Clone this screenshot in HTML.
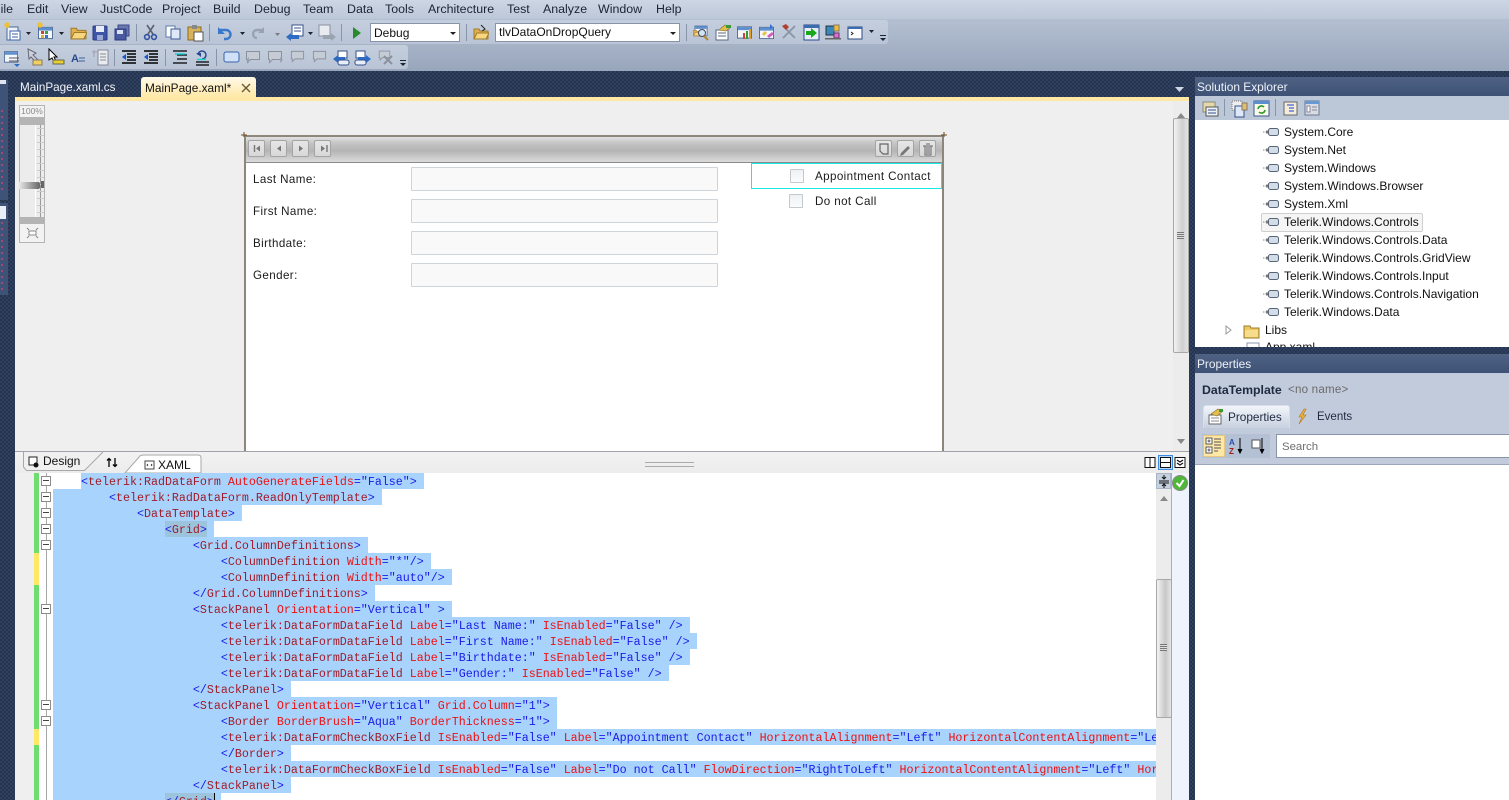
<!DOCTYPE html>
<html><head><meta charset="utf-8"><title>MainPage.xaml</title>
<style>
html,body{margin:0;padding:0}
body{width:1509px;height:800px;overflow:hidden;position:relative;background:#293955;font-family:"Liberation Sans",sans-serif;font-size:12px;color:#111}
div,span.a,svg.a{position:absolute}
#bg{left:0;top:71px;width:1509px;height:729px;background:conic-gradient(#2f4060 25%,#25344f 0 50%,#2f4060 0 75%,#25344f 0) 0 0/4px 4px}
.m{top:1px;height:16px;line-height:16px;font-size:12.4px;color:#1b2433;white-space:nowrap}
.code{left:53px;top:473px;width:1103px;height:327px;overflow:hidden;background:#fff;font-family:"Liberation Mono",monospace;font-size:11.67px;line-height:16px}
.r{left:0;height:16px;white-space:pre}
.r>span{background:#a8d3fd;padding-right:7px;display:inline-block;vertical-align:top;height:16px;line-height:18px;overflow:hidden}
i{font-style:normal;color:#1a1ae6}b{font-weight:normal;color:#a01c28}u{text-decoration:none;color:#ee1010}
em{font-style:normal;background:linear-gradient(#9cc4dd,#9cc4dd) 0 0/100% 16px no-repeat;display:inline-block;height:16px;vertical-align:top}
.t{left:1284px;height:18px;line-height:18px;white-space:nowrap;font-size:12px;color:#111}
.lab{left:253px;font-size:11.6px;letter-spacing:.4px;height:16px;line-height:16px;color:#1a1a1a}
.inp{left:411px;width:305px;height:22px;background:#f9f9f9;border:1px solid #cfd4d9;border-radius:1px}
.cb{width:12px;height:12px;border:1px solid #c4c9ce;background:linear-gradient(#eef1f4,#fafbfc);border-radius:1px}
.nb{top:140px;width:15px;height:15px;border:1px solid #a4a4a4;border-radius:2px;background:linear-gradient(#e6e6e6,#d8d8d8)}
.mb{left:41px;width:8px;height:8px;border:1px solid #8c8c8c;background:#fff}
.mb:after{content:"";position:absolute;left:1px;top:3px;width:6px;height:1px;background:#444}
</style></head><body>
<div id="bg"></div>
<!-- menu & toolbars -->
<div style="left:0;top:0;width:1509px;height:19px;background:linear-gradient(#cdd6e4,#bcc7d8)"></div>
<div style="left:0;top:19px;width:1509px;height:52px;background:linear-gradient(#b4bfd1,#98a6bc)"></div>
<div style="left:0;top:20px;width:888px;height:24px;background:linear-gradient(#c4cedd,#b9c4d6);border-radius:0 3px 3px 0"></div>
<div style="left:0;top:45px;width:408px;height:24px;background:linear-gradient(#c4cedd,#b9c4d6);border-radius:0 3px 3px 0"></div>
<span class="m a" style="left:-7px">File</span><span class="m a" style="left:27px">Edit</span><span class="m a" style="left:61px">View</span><span class="m a" style="left:100px">JustCode</span><span class="m a" style="left:162px">Project</span><span class="m a" style="left:213px">Build</span><span class="m a" style="left:254px">Debug</span><span class="m a" style="left:303px">Team</span><span class="m a" style="left:347px">Data</span><span class="m a" style="left:385px">Tools</span><span class="m a" style="left:428px">Architecture</span><span class="m a" style="left:507px">Test</span><span class="m a" style="left:543px">Analyze</span><span class="m a" style="left:598px">Window</span><span class="m a" style="left:656px">Help</span>

<svg class="a" style="left:0;top:20px" width="900" height="50" viewBox="0 20 900 50">
<defs>
<symbol id="win" viewBox="0 0 16 16"><rect x=".5" y="2.5" width="15" height="12" fill="#f4f6fa" stroke="#4a6a96"/><rect x="1" y="3" width="14" height="3" fill="#5c8fd0"/></symbol>
<symbol id="fold" viewBox="0 0 16 16"><path d="M1 4h5l1 2h8v8H1z" fill="#e0b050" stroke="#a07c2a"/><path d="M1 14l3-6h12l-3 6z" fill="#f6d67e" stroke="#a07c2a"/></symbol>
<symbol id="bub" viewBox="0 0 16 16"><path d="M1.500 2.500h13v8h-9l-3 3v-3h-1z" fill="#c6ccd6" stroke="#8b929c"/></symbol>
<symbol id="dr" viewBox="0 0 5 3"><path d="M0 0h5L2.500 3z" fill="#1b2433"/></symbol>
<symbol id="lines" viewBox="0 0 16 16"><path d="M1 2h14M6 5h9M6 8h9M6 11h9M1 14h14" stroke="#000" stroke-width="1.500" fill="none"/><path d="M1 8l4-3v6z" fill="#1a55c8"/></symbol>
</defs>
<rect x="7" y="27" width="11" height="13" fill="#eef2fa" stroke="#4a6a96"/><rect x="10" y="31" width="10" height="9" fill="#fff" stroke="#3a62a8"/><path d="M12 34h6M12 37h6" stroke="#3a62a8"/><path d="M4 25h6M7 22v6M5 23l4 4M9 23l-4 4" stroke="#f0c030" stroke-width="1.300"/>
<use href="#dr" x="26" y="32" width="5" height="3"/>
<use href="#win" x="38" y="25" width="15" height="15"/><rect x="41" y="31" width="3" height="3" fill="#d04040"/><rect x="45" y="31" width="3" height="3" fill="#40a040"/><rect x="41" y="35" width="3" height="3" fill="#e0b030"/><rect x="45" y="35" width="3" height="3" fill="#3070d0"/><path d="M37 25h6M40 22v6M38 23l4 4M42 23l-4 4" stroke="#f0c030" stroke-width="1.300"/>
<use href="#dr" x="59" y="32" width="5" height="3"/>
<use href="#fold" x="70" y="24" width="17" height="17"/>
<rect x="93" y="26" width="14" height="14" rx="1" fill="#3f55a8" stroke="#2a3a80"/><rect x="96" y="26" width="8" height="6" fill="#e8ecf6"/><rect x="97" y="35" width="6" height="5" fill="#9aa8d4"/>
<rect x="118" y="25" width="11" height="11" fill="#6a78b0" stroke="#3c4888"/><rect x="115" y="29" width="11" height="11" fill="#4a5aa0" stroke="#2a3a80"/><rect x="117" y="30" width="6" height="4" fill="#dde2f0"/>
<rect x="136" y="24" width="1" height="17" fill="#8794aa"/>
<path d="M147 25l6 9M154 25l-6 9" stroke="#5a6270" stroke-width="1.600"/><circle cx="147" cy="37" r="2.400" fill="none" stroke="#3050a0" stroke-width="1.600"/><circle cx="154" cy="37" r="2.400" fill="none" stroke="#3050a0" stroke-width="1.600"/>
<rect x="166" y="26" width="9" height="11" fill="#fff" stroke="#5a78a8"/><rect x="171" y="29" width="9" height="10" fill="#dfe8f6" stroke="#3a5a98"/>
<rect x="188" y="27" width="13" height="13" fill="#d8b25a" stroke="#8c6a20"/><rect x="192" y="25" width="5" height="4" fill="#888"/><rect x="194" y="32" width="9" height="9" fill="#fff" stroke="#555"/>
<rect x="209" y="24" width="1" height="17" fill="#8794aa"/>
<path d="M220 30h6a4 4 0 0 1 0 9h-2" fill="none" stroke="#3a78cc" stroke-width="2.400"/><path d="M218 27v7h7z" fill="#3a78cc"/>
<use href="#dr" x="240" y="32" width="5" height="3"/>
<path d="M263 30h-6a3 3 0 0 0 0 8" fill="none" stroke="#98a2b0" stroke-width="2.400"/><path d="M264 27v6h-6z" fill="#98a2b0"/>
<use href="#dr" x="275" y="33" width="5" height="3" opacity=".45"/>
<rect x="292" y="25" width="11" height="11" fill="#fff" stroke="#34508c"/><path d="M294 28h7M294 31h7" stroke="#34508c"/><path d="M286 37l5-4v2h8v4h-8v2z" fill="#2e6cc4"/>
<use href="#dr" x="308" y="32" width="5" height="3"/>
<rect x="319" y="25" width="11" height="11" fill="#e8ebf0" stroke="#8a93a2"/><path d="M336 37l-5-4v2h-8v4h8v2z" fill="#9aa3b0"/>
<rect x="341" y="24" width="1" height="17" fill="#8794aa"/>
<path d="M353 27l8 6-8 6z" fill="#2a8a30"/>
<rect x="466" y="24" width="1" height="17" fill="#8794aa"/>
<use href="#fold" x="473" y="25" width="16" height="16"/><path d="M481 25l4 4-3 2" stroke="#222" fill="none"/>
<rect x="686" y="24" width="1" height="17" fill="#8794aa"/>
<use href="#win" x="694" y="24" width="14" height="13"/><use href="#fold" x="693" y="28" width="9" height="9"/><circle cx="702" cy="33" r="3.500" fill="#cfe4f6" stroke="#445"/><path d="M704 36l4 4" stroke="#b08a30" stroke-width="2"/>
<rect x="716" y="30" width="12" height="10" fill="#fff" stroke="#5a6a86"/><path d="M718 33h8M718 36h8" stroke="#5a6a86"/><path d="M719 30l6-5 6 2-5 4z" fill="#e2c050" stroke="#8c6a20" stroke-width=".6"/><rect x="726" y="25" width="5" height="3" fill="#3a9a3a"/>
<use href="#win" x="737" y="24" width="15" height="16"/><rect x="743" y="33" width="2" height="6" fill="#d04040"/><rect x="746" y="31" width="2" height="8" fill="#30a030"/><rect x="749" y="29" width="2" height="10" fill="#e0a030"/>
<use href="#win" x="759" y="25" width="15" height="15"/><path d="M762 34l3-3 2 2-3 3z" fill="#e8c040"/><path d="M767 36l5-4 2 2-5 4z" fill="#d060c0"/><path d="M770 24l3 3-3 2z" fill="#3070d0"/>
<path d="M783 26l12 12M795 26l-12 12" stroke="#8a95a4" stroke-width="1.800"/><path d="M782 26l4-2 3 3-3 3z" fill="#b04030"/>
<rect x="804" y="25" width="15" height="15" fill="#e8eef8" stroke="#2a4a80"/><rect x="804" y="25" width="15" height="3" fill="#3c6cb0"/><path d="M806 31h5v-3l6 5-6 5v-3h-5z" fill="#18a818"/>
<rect x="826" y="26" width="8" height="9" fill="#3a88b8" stroke="#234"/><rect x="834" y="25" width="5" height="6" fill="#f0c030" stroke="#876"/><rect x="834" y="33" width="5" height="5" fill="#e070d0" stroke="#636"/><rect x="825" y="38" width="16" height="1.500" fill="#666"/>
<rect x="848" y="27" width="14" height="12" fill="#fdfdff" stroke="#2a4a80"/><rect x="848" y="27" width="14" height="2" fill="#3c6cb0"/><path d="M851 32l2 1.500-2 1.500" stroke="#222" fill="none"/>
<use href="#dr" x="869" y="30" width="5" height="3"/>
<rect x="880" y="35" width="6" height="1" fill="#1b2433"/><path d="M880 38h6l-3 3z" fill="#1b2433"/>
<!-- row 2 -->
<use href="#win" x="4" y="49" width="14" height="15"/><path d="M9 58h10M9 61h10" stroke="#556"/><path d="M14 64h6l-3 3z" fill="#2e6cc4"/>
<path d="M28 49l8 4-3 2 6 6-3 1-5-5-2 2z" fill="#cbd0d8" stroke="#667"/><rect x="33" y="60" width="9" height="5" fill="#f0d060" stroke="#876"/>
<path d="M49 49v11l3-2 2 4 2-1-2-4h3z" fill="#fff" stroke="#000"/><rect x="53" y="60" width="11" height="4" fill="#e8d030" stroke="#665"/>
<text x="71" y="62" font-family="Liberation Sans" font-size="11" font-weight="bold" fill="#2a4a90">A</text><path d="M79 58h6M79 61h6" stroke="#6a84b0" stroke-width="1.500"/>
<path d="M94 50v7M92 52h5" stroke="#aab" stroke-width="1.500"/><rect x="98" y="50" width="10" height="15" fill="#e8ebf0" stroke="#889"/><path d="M100 54h6M100 57h6M100 60h6" stroke="#889"/>
<rect x="114" y="49" width="1" height="17" fill="#8794aa"/>
<use href="#lines" x="121" y="49" width="16" height="16"/><use href="#lines" x="143" y="49" width="16" height="16"/>
<rect x="165" y="49" width="1" height="17" fill="#8794aa"/>
<path d="M173 51h14M173 63h14M177 55h10M177 59h10" stroke="#000" stroke-width="1.300"/><path d="M175 54h10" stroke="#20d0d0" stroke-width="1.500"/>
<path d="M196 62h13M196 65h13" stroke="#000" stroke-width="1.300"/><path d="M198 55a4 4 0 1 1 4 4" stroke="#2a4a90" stroke-width="1.500" fill="none"/><path d="M196 53h5v4z" fill="#2a4a90"/><path d="M197 59.500h9" stroke="#20d0d0" stroke-width="1.500"/>
<rect x="216" y="49" width="1" height="17" fill="#8794aa"/>
<rect x="224" y="52" width="15" height="10" rx="2" fill="#cfe0f8" stroke="#3a62a8"/>
<use href="#bub" x="245" y="49" width="16" height="16"/><path d="M246 60l3-3v6z" fill="#9aa2ae"/>
<use href="#bub" x="267" y="49" width="16" height="16"/><path d="M283 60l-3-3v6z" fill="#9aa2ae"/>
<use href="#bub" x="290" y="49" width="15" height="15"/><use href="#bub" x="312" y="49" width="15" height="15"/>
<rect x="338" y="51" width="9" height="7" fill="#fff" stroke="#34508c"/><path d="M333 59l5-4v2h7v4h-7v2z" fill="#2e6cc4"/><rect x="338" y="60" width="11" height="5" rx="2" fill="#e8eefa" stroke="#34508c"/>
<rect x="356" y="51" width="9" height="7" fill="#fff" stroke="#34508c"/><path d="M371 59l-5-4v2h-8v4h8v2z" fill="#2e6cc4"/><rect x="355" y="60" width="11" height="5" rx="2" fill="#e8eefa" stroke="#34508c"/>
<use href="#bub" x="377" y="49" width="15" height="13"/><path d="M384 56l8 8M392 56l-8 8" stroke="#8a929e" stroke-width="2"/>
<rect x="400" y="60" width="6" height="1" fill="#1b2433"/><path d="M400 63h6l-3 3z" fill="#1b2433"/>
</svg>
<!-- combos -->
<div style="left:370px;top:23px;width:88px;height:17px;background:#fff;border:1px solid #8794aa;line-height:19px;font-size:12px;text-indent:3px;color:#111">Debug<span class="a" style="right:3px;top:8px;border:3px solid transparent;border-top-color:#222;border-bottom:0"></span></div>
<div style="left:495px;top:23px;width:183px;height:17px;background:#fff;border:1px solid #8794aa;line-height:17px;font-size:12px;text-indent:3px;color:#111">tlvDataOnDropQuery<span class="a" style="right:3px;top:8px;border:3px solid transparent;border-top-color:#222;border-bottom:0"></span></div>

<!-- doc tabs -->
<div style="left:20px;top:80px;color:#f2f5fa;font-size:11.7px;line-height:16px;white-space:nowrap">MainPage.xaml.cs</div>
<div style="left:141px;top:77px;width:115px;height:20px;background:linear-gradient(#fff9ea,#ffe8a6);border-radius:3px 3px 0 0"></div>
<div style="left:145px;top:80px;color:#111;font-size:11.85px;line-height:16px;white-space:nowrap">MainPage.xaml*</div>
<svg class="a" style="left:241px;top:83px" width="10" height="10"><path d="M1 1l8 8M9 1l-8 8" stroke="#6b5a38" stroke-width="1.400"/></svg>
<svg class="a" style="left:1175px;top:87px" width="9" height="5"><path d="M0 0h9L4.500 5z" fill="#cdd6e4"/></svg>
<div style="left:15px;top:97px;width:1174px;height:4px;background:#ffe8a6"></div>

<!-- left strip -->
<div style="left:0;top:80px;width:8px;height:120px;background:#3f5378"></div>
<div style="left:0;top:203px;width:8px;height:92px;background:#3f5378"></div>
<div style="left:0;top:80px;width:6px;height:4px;background:#dfe6f0"></div>
<div style="left:0;top:206px;width:6px;height:13px;background:#e8eef8"></div>
<div style="left:1px;top:110px;width:2px;height:80px;background:repeating-linear-gradient(#a04a70 0 2px,transparent 2px 6px)"></div>
<div style="left:1px;top:222px;width:2px;height:70px;background:repeating-linear-gradient(#a04a70 0 2px,transparent 2px 6px)"></div>

<!-- designer -->
<div style="left:15px;top:101px;width:1158px;height:350px;background:#efefef"></div>
<div style="left:19px;top:105px;width:26px;height:138px;background:#b4b4b4"></div>
<div style="left:20px;top:106px;width:24px;height:11px;background:#f2f2f2;color:#8a8a8a;font-size:8.500px;line-height:11px;text-align:center">100%</div>
<div style="left:20px;top:125px;width:24px;height:92px;background:#ececec"></div>
<div style="left:35px;top:125px;width:1px;height:92px;background:#fff"></div>
<div style="left:40px;top:125px;width:1px;height:92px;background:#999"></div>
<div style="left:37px;top:128px;width:7px;height:85px;background:repeating-linear-gradient(#ccc 0 1px,transparent 1px 7px)"></div>
<div style="left:18px;top:182px;width:22px;height:7px;background:linear-gradient(90deg,#eee,#666);border-radius:2px"></div>
<div style="left:41px;top:181px;width:3px;height:7px;background:#666"></div>
<div style="left:20px;top:224px;width:24px;height:18px;background:#f2f2f2"></div>
<svg class="a" style="left:26px;top:227px" width="13" height="12"><rect x="3" y="4" width="7" height="4" fill="#fff" stroke="#888"/><path d="M1 1l2 2M12 1l-2 2M1 11l2-2M12 11l-2-2" stroke="#888"/></svg>

<div style="left:244px;top:135px;width:700px;height:316px;background:#fff"></div>
<div style="left:244px;top:135px;width:2px;height:316px;background:#8d867a"></div>
<div style="left:942px;top:135px;width:2px;height:316px;background:#8d867a"></div>
<div style="left:246px;top:135px;width:696px;height:2px;background:#8d867a"></div>
<div style="left:246px;top:137px;width:696px;height:25px;background:linear-gradient(#e2e2e2,#c4c4c4 25%,#b4b4b4 55%,#dcdcdc);border-bottom:1px solid #8a8a8a"></div>
<svg class="a" style="left:241px;top:132px" width="707" height="6"><path d="M3 0v5M0 3h6M703 0v5M700 3h6" stroke="#6b4a20" fill="none" stroke-width="1"/></svg>
<div class="nb" style="left:248px"></div><div class="nb" style="left:270px"></div><div class="nb" style="left:292px"></div><div class="nb" style="left:314px"></div>
<svg class="a" style="left:248px;top:140px" width="84" height="18"><path d="M6.500 5v7" stroke="#777" stroke-width="1.400"/><path d="M12 5.500v6l-4-3zM33 5.500v6l-4-3zM51 5.500v6l4-3zM73 5.500v6l4-3z" fill="#777"/><path d="M79 5v7" stroke="#777" stroke-width="1.400"/></svg>
<div class="nb" style="left:875px"></div><div class="nb" style="left:897px"></div><div class="nb" style="left:919px"></div>
<svg class="a" style="left:875px;top:140px" width="62" height="18"><path d="M5 4h8v10h-5l-3-3z" fill="none" stroke="#666" stroke-width="1.200"/><path d="M26 13l7-7 2 2-7 7-3 1z" fill="#777"/><path d="M48 6h10M50 6v9h6V6M52 7v7M54 7v7M51 4h4" fill="none" stroke="#666"/></svg>
<div class="lab" style="top:172px">Last Name:</div><div class="lab" style="top:204px">First Name:</div><div class="lab" style="top:236px">Birthdate:</div><div class="lab" style="top:268px">Gender:</div>
<div class="inp" style="top:167px"></div><div class="inp" style="top:199px"></div><div class="inp" style="top:231px"></div><div class="inp" style="top:263px"></div>
<div style="left:751px;top:163px;width:189px;height:24px;border:1px solid #18e8e8"></div>
<div class="cb" style="left:790px;top:169px"></div><div class="lab" style="left:815px;top:169px;white-space:nowrap">Appointment Contact</div>
<div class="cb" style="left:789px;top:194px"></div><div class="lab" style="left:815px;top:194px;white-space:nowrap">Do not Call</div>

<!-- designer scrollbar -->
<div style="left:1173px;top:101px;width:16px;height:350px;background:#ececec"></div>
<div style="left:1173px;top:118px;width:14px;height:233px;background:linear-gradient(90deg,#f2f2f2,#cfcfcf 60%,#e4e4e4);border:1px solid #a8a8a8;border-radius:2px"></div>
<div style="left:1177px;top:232px;width:7px;height:7px;background:repeating-linear-gradient(#777 0 1px,#ddd 1px 2px)"></div>
<svg class="a" style="left:1176px;top:113px" width="10" height="6"><path d="M1 5h8L5 0z" fill="#888"/></svg>
<svg class="a" style="left:1176px;top:439px" width="10" height="6"><path d="M1 0h8L5 5z" fill="#888"/></svg>

<!-- editor tab bar -->
<div style="left:15px;top:451px;width:1174px;height:22px;background:linear-gradient(#f2f2f2,#ececec);border-top:1px solid #a0a4aa;box-sizing:border-box"></div>
<div style="left:645px;top:462px;width:49px;height:3px;border-top:1px solid #aaa;border-bottom:1px solid #aaa"></div>
<svg class="a" style="left:20px;top:451px" width="182" height="22"><path d="M3.500 1v15l3 3.500h58L83 1" fill="#f0f0f0" stroke="#a8a8a8"/><path d="M105 22L120 5q1-1 4-1h54q3 0 3 3v15z" fill="#fff" stroke="#a8a8a8"/><rect x="9" y="6" width="8" height="8" fill="#fff" stroke="#222"/><circle cx="16" cy="14" r="2.500" fill="#111"/><path d="M89 8v8M87 9.500l2-2 2 2M95 7v8M93 13.500l2 2 2-2" stroke="#000" fill="none" stroke-width="1.300"/><rect x="125" y="10" width="9" height="8" fill="#fff" stroke="#444"/><path d="M128 13l-1 1 1 1M131 13l1 1-1 1" stroke="#222" fill="none" stroke-width=".8"/></svg>
<div style="left:43px;top:453px;font-size:12px;line-height:16px;color:#111">Design</div>
<div style="left:158px;top:457px;font-size:12px;line-height:16px;color:#111">XAML</div>
<svg class="a" style="left:1143px;top:455px" width="44" height="16"><rect x="2" y="2.500" width="10" height="10" fill="#fff" stroke="#111"/><path d="M7 3v9" stroke="#111"/><rect x="15.500" y=".5" width="14" height="14" fill="#bcd8f8" stroke="#3c8ae0"/><rect x="17.500" y="2.500" width="10" height="10" fill="#fff" stroke="#111"/><path d="M18 7.500h9" stroke="#111"/><rect x="32" y="2.500" width="10" height="10" fill="#fff" stroke="#111"/><path d="M34 5l3 2 3-2M34 8l3 2 3-2" stroke="#111" fill="none" stroke-width="1.200"/></svg>

<!-- editor margins -->
<div style="left:15px;top:473px;width:19px;height:327px;background:#efefef"></div>
<div style="left:34px;top:473px;width:5px;height:327px;background:#6fdc6f"></div>
<div style="left:34px;top:553px;width:5px;height:32px;background:#ffe866"></div>
<div style="left:34px;top:729px;width:5px;height:16px;background:#ffe866"></div>
<div style="left:39px;top:473px;width:14px;height:327px;background:#fff"></div>
<div style="left:46px;top:473px;width:1px;height:327px;background:#a8a8a8"></div>
<div class="mb" style="top:476px"></div><div class="mb" style="top:492px"></div><div class="mb" style="top:508px"></div><div class="mb" style="top:524px"></div><div class="mb" style="top:540px"></div><div class="mb" style="top:604px"></div><div class="mb" style="top:700px"></div><div class="mb" style="top:716px"></div>

<!-- code -->
<div class="code">
<div class="r" style="top:0;left:28px"><span><i>&lt;</i><b>telerik:RadDataForm</b> <u>AutoGenerateFields</u><i>="False"&gt;</i></span></div>
<div class="r" style="top:16px"><span>        <i>&lt;</i><b>telerik:RadDataForm.ReadOnlyTemplate</b><i>&gt;</i></span></div>
<div class="r" style="top:32px"><span>            <i>&lt;</i><b>DataTemplate</b><i>&gt;</i></span></div>
<div class="r" style="top:48px"><span>                <em><i>&lt;</i><b>Grid</b><i>&gt;</i></em></span></div>
<div class="r" style="top:64px"><span>                    <i>&lt;</i><b>Grid.ColumnDefinitions</b><i>&gt;</i></span></div>
<div class="r" style="top:80px"><span>                        <i>&lt;</i><b>ColumnDefinition</b> <u>Width</u><i>="*"/&gt;</i></span></div>
<div class="r" style="top:96px"><span>                        <i>&lt;</i><b>ColumnDefinition</b> <u>Width</u><i>="auto"/&gt;</i></span></div>
<div class="r" style="top:112px"><span>                    <i>&lt;/</i><b>Grid.ColumnDefinitions</b><i>&gt;</i></span></div>
<div class="r" style="top:128px"><span>                    <i>&lt;</i><b>StackPanel</b> <u>Orientation</u><i>="Vertical" &gt;</i></span></div>
<div class="r" style="top:144px"><span>                        <i>&lt;</i><b>telerik:DataFormDataField</b> <u>Label</u><i>="Last Name:"</i> <u>IsEnabled</u><i>="False" /&gt;</i></span></div>
<div class="r" style="top:160px"><span>                        <i>&lt;</i><b>telerik:DataFormDataField</b> <u>Label</u><i>="First Name:"</i> <u>IsEnabled</u><i>="False" /&gt;</i></span></div>
<div class="r" style="top:176px"><span>                        <i>&lt;</i><b>telerik:DataFormDataField</b> <u>Label</u><i>="Birthdate:"</i> <u>IsEnabled</u><i>="False" /&gt;</i></span></div>
<div class="r" style="top:192px"><span>                        <i>&lt;</i><b>telerik:DataFormDataField</b> <u>Label</u><i>="Gender:"</i> <u>IsEnabled</u><i>="False" /&gt;</i></span></div>
<div class="r" style="top:208px"><span>                    <i>&lt;/</i><b>StackPanel</b><i>&gt;</i></span></div>
<div class="r" style="top:224px"><span>                    <i>&lt;</i><b>StackPanel</b> <u>Orientation</u><i>="Vertical"</i> <u>Grid.Column</u><i>="1"&gt;</i></span></div>
<div class="r" style="top:240px"><span>                        <i>&lt;</i><b>Border</b> <u>BorderBrush</u><i>="Aqua"</i> <u>BorderThickness</u><i>="1"&gt;</i></span></div>
<div class="r" style="top:256px"><span>                        <i>&lt;</i><b>telerik:DataFormCheckBoxField</b> <u>IsEnabled</u><i>="False"</i> <u>Label</u><i>="Appointment Contact"</i> <u>HorizontalAlignment</u><i>="Left"</i> <u>HorizontalContentAlignment</u><i>="Left"</i> <u>Foo</u></span></div>
<div class="r" style="top:272px"><span>                        <i>&lt;/</i><b>Border</b><i>&gt;</i></span></div>
<div class="r" style="top:288px"><span>                        <i>&lt;</i><b>telerik:DataFormCheckBoxField</b> <u>IsEnabled</u><i>="False"</i> <u>Label</u><i>="Do not Call"</i> <u>FlowDirection</u><i>="RightToLeft"</i> <u>HorizontalContentAlignment</u><i>="Left"</i> <u>HorizontalAlignment</u></span></div>
<div class="r" style="top:304px"><span>                    <i>&lt;/</i><b>StackPanel</b><i>&gt;</i></span></div>
<div class="r" style="top:320px"><span>                <em><i>&lt;/</i><b>Grid</b><i>&gt;</i></em></span></div>
<div style="left:161px;top:320px;width:1px;height:7px;background:#000"></div>
</div>

<!-- editor scrollbar -->
<div style="left:1156px;top:473px;width:16px;height:327px;background:#ececec;border-right:1px solid #9fb0c8;box-sizing:border-box"></div>
<div style="left:1172px;top:473px;width:17px;height:327px;background:#eef3fc"></div>
<div style="left:1156px;top:473px;width:15px;height:16px;background:#c6d0de;border:1px solid #a9b4c4;box-sizing:border-box"></div>
<svg class="a" style="left:1157px;top:474px" width="14" height="15"><path d="M2 7h10M2 9h10M7 1v4M5 3l2 2 2-2M7 14v-4M5 12l2-2 2 2" stroke="#111" fill="none"/></svg>
<svg class="a" style="left:1172px;top:475px" width="16" height="16"><circle cx="8" cy="8" r="7.500" fill="#4db838" stroke="#888"/><path d="M4.500 8l3 3 4-6" stroke="#fff" stroke-width="2" fill="none"/></svg>
<svg class="a" style="left:1159px;top:496px" width="10" height="6"><path d="M1 5h8L5 0z" fill="#888"/></svg>
<div style="left:1156px;top:579px;width:14px;height:137px;background:linear-gradient(90deg,#f2f2f2,#c8c8c8 60%,#e4e4e4);border:1px solid #a8a8a8;border-radius:2px"></div>
<div style="left:1160px;top:644px;width:7px;height:7px;background:repeating-linear-gradient(#777 0 1px,#ddd 1px 2px)"></div>

<!-- solution explorer -->
<div style="left:1195px;top:77px;width:314px;height:19px;background:linear-gradient(#4f6284,#3e5276)"></div>
<div style="left:1197px;top:79px;color:#eef2f8;line-height:16px;font-size:11.9px">Solution Explorer</div>
<div style="left:1195px;top:96px;width:314px;height:24px;background:#bcc7d8"></div>
<svg class="a" style="left:1195px;top:96px" width="130" height="24"><rect x="8" y="6" width="12" height="10" fill="#e6d8a8" stroke="#8a8a7a"/><rect x="11" y="11" width="12" height="9" fill="#eef2f8" stroke="#555"/><path d="M13 14h8M13 17h8" stroke="#34508c"/><rect x="29" y="3" width="1" height="17" fill="#8794aa"/><rect x="37" y="5" width="10" height="9" fill="#eee" stroke="#777" stroke-dasharray="1 1"/><rect x="40" y="10" width="9" height="11" fill="#dfe8f8" stroke="#34508c"/><rect x="47" y="7" width="5" height="7" fill="#e0c070" stroke="#876"/><rect x="59" y="5" width="15" height="15" fill="#fbfbe8" stroke="#3a5a90"/><rect x="59" y="5" width="15" height="3" fill="#5c8fd0"/><path d="M63 13a3.500 3.500 0 0 1 6-2M70 14a3.500 3.500 0 0 1-6 2" stroke="#2a9a2a" stroke-width="1.600" fill="none"/><rect x="80" y="3" width="1" height="17" fill="#8794aa"/><rect x="89" y="6" width="13" height="13" fill="#f2eddc" stroke="#666"/><path d="M92 9h7M94 12h5M94 15h5" stroke="#2040d0"/><rect x="110" y="5" width="14" height="14" fill="#d8dce4" stroke="#6a7a90"/><rect x="110" y="5" width="14" height="3" fill="#6a98d0"/><rect x="112" y="10" width="3" height="6" fill="#fff" stroke="#889"/><path d="M117 11h5M117 14h5" stroke="#889"/></svg>
<div style="left:1195px;top:120px;width:314px;height:227px;background:#fff;overflow:hidden"></div>
<div style="left:1261px;top:213px;width:160px;height:17px;background:#f5f5f5;border:1px solid #cfcfcf;border-radius:2px"></div>
<div class="t" style="top:123px">System.Core</div><div class="t" style="top:141px">System.Net</div><div class="t" style="top:159px">System.Windows</div><div class="t" style="top:177px">System.Windows.Browser</div><div class="t" style="top:195px">System.Xml</div><div class="t" style="top:213px">Telerik.Windows.Controls</div><div class="t" style="top:231px">Telerik.Windows.Controls.Data</div><div class="t" style="top:249px">Telerik.Windows.Controls.GridView</div><div class="t" style="top:267px">Telerik.Windows.Controls.Input</div><div class="t" style="top:285px">Telerik.Windows.Controls.Navigation</div><div class="t" style="top:303px">Telerik.Windows.Data</div>
<svg class="a" style="left:1263px;top:126px" width="17" height="192"><defs><g id="ref"><path d="M0 6h4" stroke="#8a8a8a" stroke-dasharray="1 .5"/><rect x="3" y="4.500" width="2" height="3" fill="#777"/><rect x="5.500" y="2.500" width="10" height="7" rx="2" fill="#d4dce8" stroke="#556476"/></g></defs><use href="#ref" y="0"/><use href="#ref" y="18"/><use href="#ref" y="36"/><use href="#ref" y="54"/><use href="#ref" y="72"/><use href="#ref" y="90"/><use href="#ref" y="108"/><use href="#ref" y="126"/><use href="#ref" y="144"/><use href="#ref" y="162"/><use href="#ref" y="180"/></svg>
<svg class="a" style="left:1225px;top:323px" width="38" height="24"><path d="M1 3l5 4-5 4z" fill="#fff" stroke="#999"/><path d="M19 3h6l1 2h8v10H19z" fill="#eec860" stroke="#9a7c2c"/><path d="M20 7h13v7H20z" fill="#f6dc8c"/><rect x="22" y="20" width="12" height="6" fill="#fff" stroke="#8a98b0"/></svg>
<div class="t" style="left:1265px;top:321px">Libs</div>
<div style="left:1195px;top:334px;width:314px;height:13px;overflow:hidden"><div class="t" style="left:70px;top:4px">App.xaml</div></div>

<!-- properties -->
<div style="left:1195px;top:347px;width:314px;height:7px;background:conic-gradient(#2f4060 25%,#25344f 0 50%,#2f4060 0 75%,#25344f 0) 0 0/4px 4px"></div>
<div style="left:1195px;top:354px;width:314px;height:19px;background:linear-gradient(#4f6284,#3e5276)"></div>
<div style="left:1197px;top:356px;color:#eef2f8;line-height:16px;font-size:11.9px">Properties</div>
<div style="left:1195px;top:373px;width:314px;height:92px;background:#c2cbdc"></div>
<div style="left:1202px;top:382px;font-weight:bold;font-size:12.3px;line-height:16px;color:#1e2a40">DataTemplate</div>
<div style="left:1288px;top:382px;font-size:11.6px;line-height:16px;color:#6a6a6a;letter-spacing:.2px">&lt;no name&gt;</div>
<div style="left:1203px;top:405px;width:87px;height:23px;background:linear-gradient(#f2f5fa,#c8d1e0);border:1px solid #d8dfe9;border-bottom:0;box-sizing:border-box;border-radius:3px 3px 0 0"></div>
<div style="left:1228px;top:409px;line-height:16px;color:#1e2a40;font-size:11.8px">Properties</div>
<div style="left:1317px;top:409px;line-height:16px;color:#1e2a40;font-size:11.5px">Events</div>
<svg class="a" style="left:1208px;top:408px" width="108" height="18"><rect x="1" y="7" width="12" height="9" fill="#fff" stroke="#666"/><path d="M3 10h8M3 13h8" stroke="#889"/><path d="M3 6l7-5 5 2-6 5z" fill="#e2c050" stroke="#8c6a20" stroke-width=".6"/><rect x="11" y="1" width="4" height="3" fill="#3a9a3a"/><path d="M96 1l-5 8h3l-3 7 7-9h-3l3-6z" fill="#e8b040" stroke="#b07820" stroke-width=".6"/></svg>
<div style="left:1202px;top:434px;width:68px;height:24px;background:#b4c0d3"></div>
<div style="left:1203px;top:435px;width:22px;height:22px;background:#ffe8a6;border:1px solid #e8c880;box-sizing:border-box"></div>
<svg class="a" style="left:1205px;top:437px" width="62" height="18"><rect x="1" y="1" width="6" height="6" fill="#fff" stroke="#555"/><rect x="1" y="10" width="6" height="6" fill="#fff" stroke="#555"/><path d="M2.500 4h3M4 2.500v3M2.500 13h3M4 11.500v3M9 2h7M9 5h7M9 8h7M9 11h7M9 14h4" stroke="#555"/><text x="24" y="8" font-size="8" font-weight="bold" fill="#2a50b0" font-family="Liberation Sans">A</text><text x="24" y="17" font-size="8" font-weight="bold" fill="#a02020" font-family="Liberation Sans">Z</text><path d="M35 1v13M33 12l2 4 2-4M57 1v13M55 12l2 4 2-4" stroke="#000" fill="#000"/><rect x="47" y="3" width="8" height="8" fill="#fff" stroke="#555"/></svg>
<div style="left:1276px;top:434px;width:240px;height:22px;background:#fff;border:1px solid #8794aa"></div>
<div style="left:1282px;top:439px;line-height:16px;color:#6d6d6d;font-size:11.4px">Search</div>
<div style="left:1195px;top:464px;width:314px;height:1px;background:#9aa7bd"></div>
<div style="left:1195px;top:465px;width:314px;height:335px;background:#fff"></div>
</body></html>
